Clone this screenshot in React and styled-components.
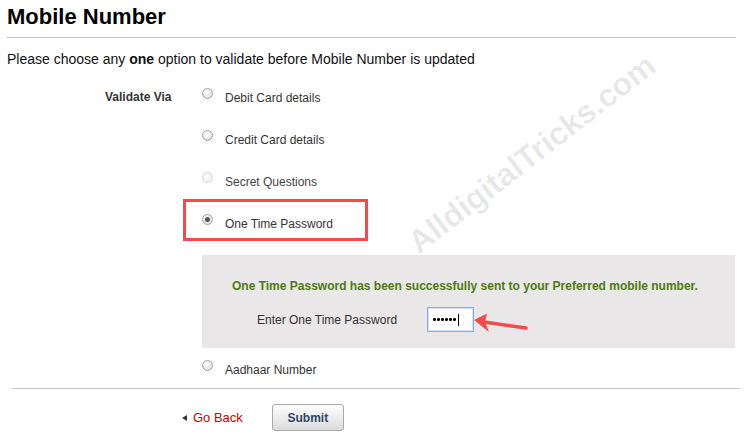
import React from "react";
import styled, { createGlobalStyle } from "styled-components";

const GlobalStyle = createGlobalStyle`
  body {
    margin: 0;
    background: #fff;
    font-family: "Liberation Sans", Arial, sans-serif;
  }
`;

const Page = styled.div`
  position: relative;
  width: 746px;
  height: 440px;
  overflow: hidden;
  color: #222;
`;

const Title = styled.h1`
  margin: 0 10px 0 7px;
  padding: 1px 0 4px;
  font-size: 22px;
  line-height: 32px;
  font-weight: bold;
  color: #000;
  border-bottom: 1px solid #c4c4c4;
`;

const Intro = styled.p`
  margin: 12px 0 0 7px;
  font-size: 14px;
  line-height: 18px;
  color: #111;

  b {
    font-weight: bold;
  }
`;

const FormSection = styled.div`
  display: flex;
  margin-top: 5px;
`;

const FieldLabel = styled.div`
  width: 78px;
  margin-left: 105px;
  padding-top: 10px;
  font-size: 12px;
  line-height: 29px;
  font-weight: bold;
  color: #333;
`;

const Options = styled.div`
  flex: 1;
  display: flex;
  flex-direction: column;
  align-items: flex-start;
`;

const OptionRow = styled.label`
  display: flex;
  align-items: center;
  box-sizing: border-box;
  height: ${(p) => (p.$compact ? 34 : 42)}px;
  padding: ${(p) => (p.$compact ? 10 : 7)}px 32px 0 16px;
  border: 3px solid ${(p) => (p.$highlight ? "#f94848" : "transparent")};
  font-size: 12px;
  color: ${(p) => (p.$disabled ? "#444" : "#333")};
`;

const Radio = styled.span`
  position: relative;
  width: 11px;
  height: 11px;
  margin: 0 12px 9px 0;
  border-radius: 50%;
  box-sizing: border-box;
  border: 1px solid ${(p) => (p.$disabled ? "#dadada" : "#a4a4a4")};
  background: ${(p) =>
    p.$disabled
      ? "radial-gradient(circle at 40% 35%, #fdfdfd, #ececec)"
      : "radial-gradient(circle at 40% 35%, #ffffff, #d6d6d6)"};

  &::after {
    content: "";
    display: ${(p) => (p.$checked ? "block" : "none")};
    position: absolute;
    left: 2px;
    top: 2px;
    width: 5px;
    height: 5px;
    border-radius: 50%;
    background: #555;
  }
`;

const OtpPanel = styled.div`
  align-self: stretch;
  margin: 14px 11px 0 19px;
  padding: 23px 0 16px;
  background: #e9e7e8;
`;

const SuccessText = styled.div`
  padding-left: 30px;
  font-size: 12px;
  line-height: 16px;
  font-weight: bold;
  color: #4b7b12;
`;

const OtpRow = styled.div`
  display: flex;
  align-items: center;
  height: 25px;
  margin-top: 13px;
  padding-left: 55px;
`;

const OtpLabel = styled.span`
  width: 170px;
  font-size: 12px;
  color: #333;
`;

const OtpInput = styled.div`
  position: relative;
  display: flex;
  align-items: center;
  gap: 1.5px;
  box-sizing: border-box;
  width: 47px;
  height: 25px;
  padding-left: 5px;
  background: #fff;
  border: 1px solid #8aaee3;
  box-shadow: inset 0 0 0 1px #d3e0f5;
`;

const Dot = styled.span`
  width: 2.5px;
  height: 2.5px;
  border-radius: 50%;
  background: #000;
`;

const Caret = styled.span`
  width: 1px;
  height: 12px;
  margin-left: 1px;
  background: #000;
`;

const Arrow = styled.svg`
  position: absolute;
  left: 45px;
  top: 3px;
  overflow: visible;
`;

const Divider = styled.hr`
  margin: 6px 6px 0 12px;
  border: 0;
  border-top: 1px solid #c4c4c4;
`;

const Footer = styled.div`
  display: flex;
  align-items: center;
  height: 27px;
  margin-top: 15px;
  padding-left: 182px;
`;

const BackLink = styled.a`
  display: flex;
  align-items: center;
  gap: 6px;
  font-size: 13px;
  color: #cc0000;
  text-decoration: none;

  &::before {
    content: "";
    border-top: 3px solid transparent;
    border-bottom: 3px solid transparent;
    border-right: 5px solid #333;
  }
`;

const SubmitButton = styled.button`
  width: 72px;
  height: 27px;
  margin-left: 29px;
  border: 1px solid #a9a9a9;
  border-radius: 3px;
  background: linear-gradient(#fdfdfd, #dcdcdc);
  font-family: "Liberation Sans", Arial, sans-serif;
  font-size: 12px;
  font-weight: bold;
  color: #2f4566;
`;

const Watermark = styled.span`
  position: absolute;
  left: 532px;
  top: 154px;
  transform: translate(-50%, -50%) rotate(-37.7deg);
  font-size: 32px;
  font-weight: bold;
  color: rgba(0, 0, 0, 0.09);
  white-space: nowrap;
  pointer-events: none;
`;

const options = [
  { id: "debit", label: "Debit Card details" },
  { id: "credit", label: "Credit Card details" },
  { id: "secret", label: "Secret Questions", disabled: true },
  { id: "otp", label: "One Time Password", checked: true },
];

export default function App() {
  return (
    <>
      <GlobalStyle />
      <Page>
        <Title>Mobile Number</Title>
        <Intro>
          Please choose any <b>one</b> option to validate before Mobile Number is updated
        </Intro>
        <FormSection>
          <FieldLabel>Validate Via</FieldLabel>
          <Options>
            {options.map((o) => (
              <OptionRow key={o.id} $highlight={o.checked} $disabled={o.disabled}>
                <Radio $checked={o.checked} $disabled={o.disabled} />
                {o.label}
              </OptionRow>
            ))}
            <OtpPanel>
              <SuccessText>
                One Time Password has been successfully sent to your Preferred mobile number.
              </SuccessText>
              <OtpRow>
                <OtpLabel>Enter One Time Password</OtpLabel>
                <OtpInput>
                  {[0, 1, 2, 3, 4, 5].map((i) => (
                    <Dot key={i} />
                  ))}
                  <Caret />
                  <Arrow width="56" height="25" viewBox="0 0 56 25">
                    <path d="M1 9 L14 2.5 L12 11 L16 21 Z" fill="#f24b4b" />
                    <line x1="11" y1="11" x2="53" y2="17" stroke="#f24b4b" strokeWidth="3.5" strokeLinecap="round" />
                  </Arrow>
                </OtpInput>
              </OtpRow>
            </OtpPanel>
            <OptionRow $compact>
              <Radio />
              Aadhaar Number
            </OptionRow>
          </Options>
        </FormSection>
        <Divider />
        <Footer>
          <BackLink href="#">Go Back</BackLink>
          <SubmitButton type="button">Submit</SubmitButton>
        </Footer>
        <Watermark>AlldigitalTricks.com</Watermark>
      </Page>
    </>
  );
}
